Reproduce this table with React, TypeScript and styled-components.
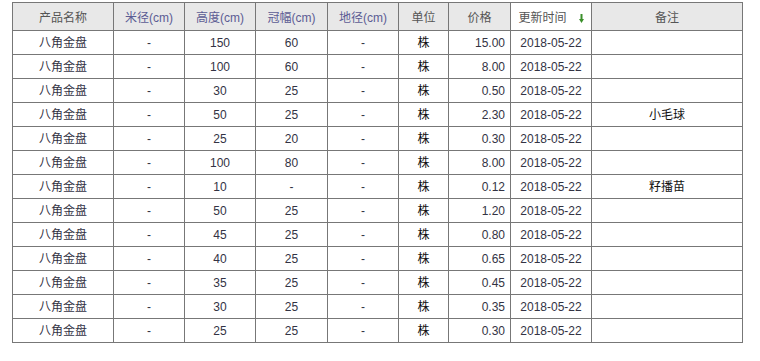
import React from 'react'
import styled, { createGlobalStyle } from 'styled-components'

const GlobalStyle = createGlobalStyle`
    body {
        margin: 0;
        background: #ffffff;
        font-family: "Liberation Sans", Arial, "Noto Sans CJK SC", sans-serif;
        font-size: 12px;
    }
`

const PageWrapper = styled('div')`
    padding: 2px 0 0 12px;
`

const PriceTable = styled('table')`
    border-collapse: collapse;
    table-layout: fixed;
    width: 730px;
    border: solid 1px #777777;
`

interface HeadCellType {
    light?: boolean
    blue?: boolean
}

const HeadCell = styled('th')<HeadCellType>`
    background: ${({ light }): string => light ? '#ffffff' : '#e8e8e8'};
    border: solid 1px #777777;
    color: ${({ blue }): string => blue ? '#5c5c94' : '#555555'};
    font-weight: normal;
    height: 27px;
    padding: 0;
    text-align: center;
    vertical-align: middle;
`

interface CellType {
    align?: 'left' | 'center' | 'right'
    dark?: boolean
}

const Cell = styled('td')<CellType>`
    border: solid 1px #777777;
    color: ${({ dark }): string => dark ? '#111111' : '#333344'};
    height: 23px;
    line-height: 14px;
    padding: 0 ${({ align }): string => align === 'right' ? '5px' : '0'} 0 0;
    text-align: ${({ align }): string => align || 'center'};
    vertical-align: middle;
`

const SortArrow = styled('svg')`
    display: inline-block;
    margin-left: 12px;
    vertical-align: -1px;
`

const columns = [
    { title: '产品名称', width: 101 },
    { title: '米径(cm)', width: 71, blue: true },
    { title: '高度(cm)', width: 71, blue: true },
    { title: '冠幅(cm)', width: 72, blue: true },
    { title: '地径(cm)', width: 71, blue: true },
    { title: '单位', width: 50 },
    { title: '价格', width: 62 },
    { title: '更新时间', width: 81, light: true, sort: true },
    { title: '备注', width: 151 },
]

const rows: [string, string, string][] = [
    ['150', '60', '15.00'],
    ['100', '60', '8.00'],
    ['30', '25', '0.50'],
    ['50', '25', '2.30'],
    ['25', '20', '0.30'],
    ['100', '80', '8.00'],
    ['10', '-', '0.12'],
    ['50', '25', '1.20'],
    ['45', '25', '0.80'],
    ['40', '25', '0.65'],
    ['35', '25', '0.45'],
    ['30', '25', '0.35'],
    ['25', '25', '0.30'],
]

const notes: Record<number, string> = { 3: '小毛球', 6: '籽播苗' }

export default function App(): JSX.Element {
    return (
        <PageWrapper>
            <GlobalStyle />
            <PriceTable>
                <colgroup>
                    {columns.map((col) => <col key={col.title} style={{ width: col.width }} />)}
                </colgroup>
                <thead>
                    <tr>
                        {columns.map((col) => (
                            <HeadCell key={col.title} blue={col.blue} light={col.light}>
                                {col.title}
                                {col.sort && (
                                    <SortArrow width="5" height="9" viewBox="0 0 5 9">
                                        <rect x="1.5" y="0" width="2" height="6" fill="#3a8f2a" />
                                        <polygon points="0,5 5,5 2.5,9" fill="#3a8f2a" />
                                    </SortArrow>
                                )}
                            </HeadCell>
                        ))}
                    </tr>
                </thead>
                <tbody>
                    {rows.map(([height, crown, price], i) => (
                        <tr key={i}>
                            <Cell>八角金盘</Cell>
                            <Cell>-</Cell>
                            <Cell>{height}</Cell>
                            <Cell>{crown}</Cell>
                            <Cell>-</Cell>
                            <Cell dark>株</Cell>
                            <Cell align="right">{price}</Cell>
                            <Cell>2018-05-22</Cell>
                            <Cell dark>{notes[i] || ''}</Cell>
                        </tr>
                    ))}
                </tbody>
            </PriceTable>
        </PageWrapper>
    )
}
